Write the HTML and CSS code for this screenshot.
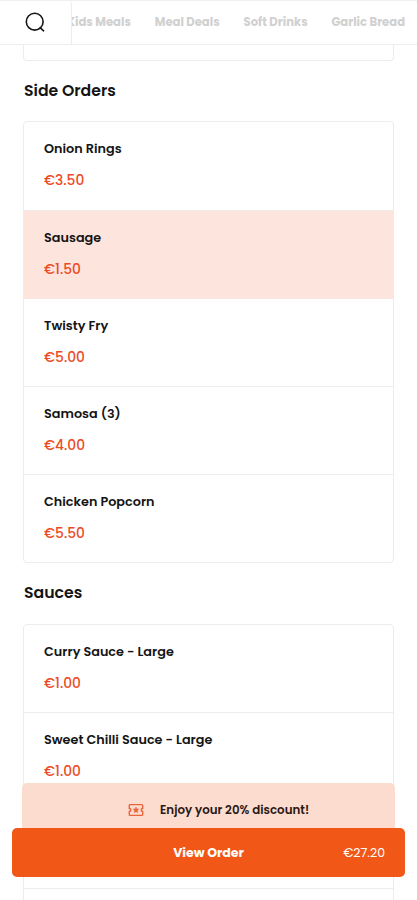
FILE: index.html
```html
<!DOCTYPE html>
<html lang="en">
<head>
<meta charset="utf-8">
<title>Menu</title>
<link rel="stylesheet" href="styles.css">
</head>
<body>
<div class="screen">
  <header class="topbar">
    <button class="search" aria-label="Search">
      <svg width="22" height="22" viewBox="0 0 22 22" fill="none" stroke="#151515" stroke-width="1.6" stroke-linecap="round"><circle cx="10.7" cy="9.700" r="8.4"/><path d="M16.300 15.900L19.600 18.800"/></svg>
    </button>
    <nav class="tabs"><a class="kids">Kids Meals</a><a>Meal Deals</a><a>Soft Drinks</a><a>Garlic Bread</a></nav>
  </header>
  <main class="menu">
    <div class="card previous"></div>
    <h2>Side Orders</h2>
    <section class="card">
      <article class="item"><h3>Onion Rings</h3><p>€3.50</p></article>
      <article class="item selected"><h3>Sausage</h3><p>€1.50</p></article>
      <article class="item"><h3>Twisty Fry</h3><p>€5.00</p></article>
      <article class="item"><h3>Samosa (3)</h3><p>€4.00</p></article>
      <article class="item"><h3>Chicken Popcorn</h3><p>€5.50</p></article>
    </section>
    <h2 class="sauces">Sauces</h2>
    <section class="card">
      <article class="item"><h3>Curry Sauce - Large</h3><p>€1.00</p></article>
      <article class="item"><h3>Sweet Chilli Sauce - Large</h3><p>€1.00</p></article>
      <article class="item"></article>
      <article class="item"></article>
    </section>
  </main>
  <footer class="order">
    <div class="discount">
      <svg width="16" height="14" viewBox="0 0 16 14" fill="none" stroke="#e9653c" stroke-width="1.4"><path d="M2.300 1.600h11.400q1 0 1 1v2.900a1.500 1.500 0 0 0 0 3v2.900q0 1-1 1H2.300q-1 0-1-1V8.500a1.500 1.500 0 0 0 0-3V2.600q0-1 1-1z"/><path d="M8 4.100l.9 1.800 2 .3-1.450 1.400.35 2L8 8.650l-1.800.95.35-2L5.100 6.200l2-.3z" fill="#e9653c" stroke="#e9653c" stroke-width=".5"/></svg>
      <span>Enjoy your 20% discount!</span>
    </div>
    <button class="view"><strong>View Order</strong><span>€27.20</span></button>
  </footer>
</div>
</body>
</html>
```
FILE: styles.css
```css
* { box-sizing: border-box; margin: 0; padding: 0; }
body { background: #fff; font-family: Poppins, Inter, sans-serif; color: #141414; }
button { border: 0; font-family: inherit; }
.screen { position: relative; height: 900px; overflow: hidden; }
.topbar { display: flex; height: 45px; border-top: 1px solid #f0f0f0; border-bottom: 1px solid #ededed; overflow: hidden; }
.search { flex: 0 0 72px; display: flex; align-items: center; padding-left: 24px; background: #fff; border-right: 1px solid #ececec; border-top-right-radius: 3px; }
.tabs { flex: 1; display: flex; align-items: center; gap: 23.9px; overflow: hidden; font-size: 11.6px; font-weight: 700; color: #d0d0d0; white-space: nowrap; }
.tabs a { flex: none; }
.tabs .kids { margin-left: -5px; }
.menu { padding: 0 23px; }
.card { border: 1px solid #ececec; border-radius: 4px; overflow: hidden; }
.previous { height: 16px; border-top: 0; border-radius: 0 0 4px 4px; }
h2 { height: 60px; padding-left: 1px; font-size: 15.7px; line-height: 59px; font-weight: 600; }
.sauces { height: 60.4px; line-height: 60px; }
.item { height: 88px; padding: 16px 20px 0; border-bottom: 1px solid #ececec; }
.item:first-child { height: 88.6px; }
.item:last-child { height: 87.6px; border-bottom: 0; }
.selected { background: #fde4dd; border-color: #fde4dd; }
h3 { height: 21px; font-size: 12.8px; line-height: 21px; font-weight: 600; white-space: nowrap; }
.item p { margin-top: 11px; height: 22px; font-size: 13.8px; line-height: 22px; font-weight: 500; color: #ec4b24; }
.order { position: absolute; left: 12px; right: 12px; top: 783px; }
.discount { display: flex; align-items: center; gap: 16px; height: 54px; margin: 0 10px; padding: 0 0 0 106px; border-radius: 5px 5px 0 0; background: #fbdccf; font-size: 11.85px; font-weight: 600; color: #2b1712; }
.view { display: grid; grid-template-columns: 1fr auto 1fr; align-items: center; width: 100%; height: 49px; margin-top: -9px; padding: 0 20px; border-radius: 5px; background: #f15716; color: #fff; font-size: 12.5px; }
.view strong { grid-column: 2; }
.view span { justify-self: end; }
```
